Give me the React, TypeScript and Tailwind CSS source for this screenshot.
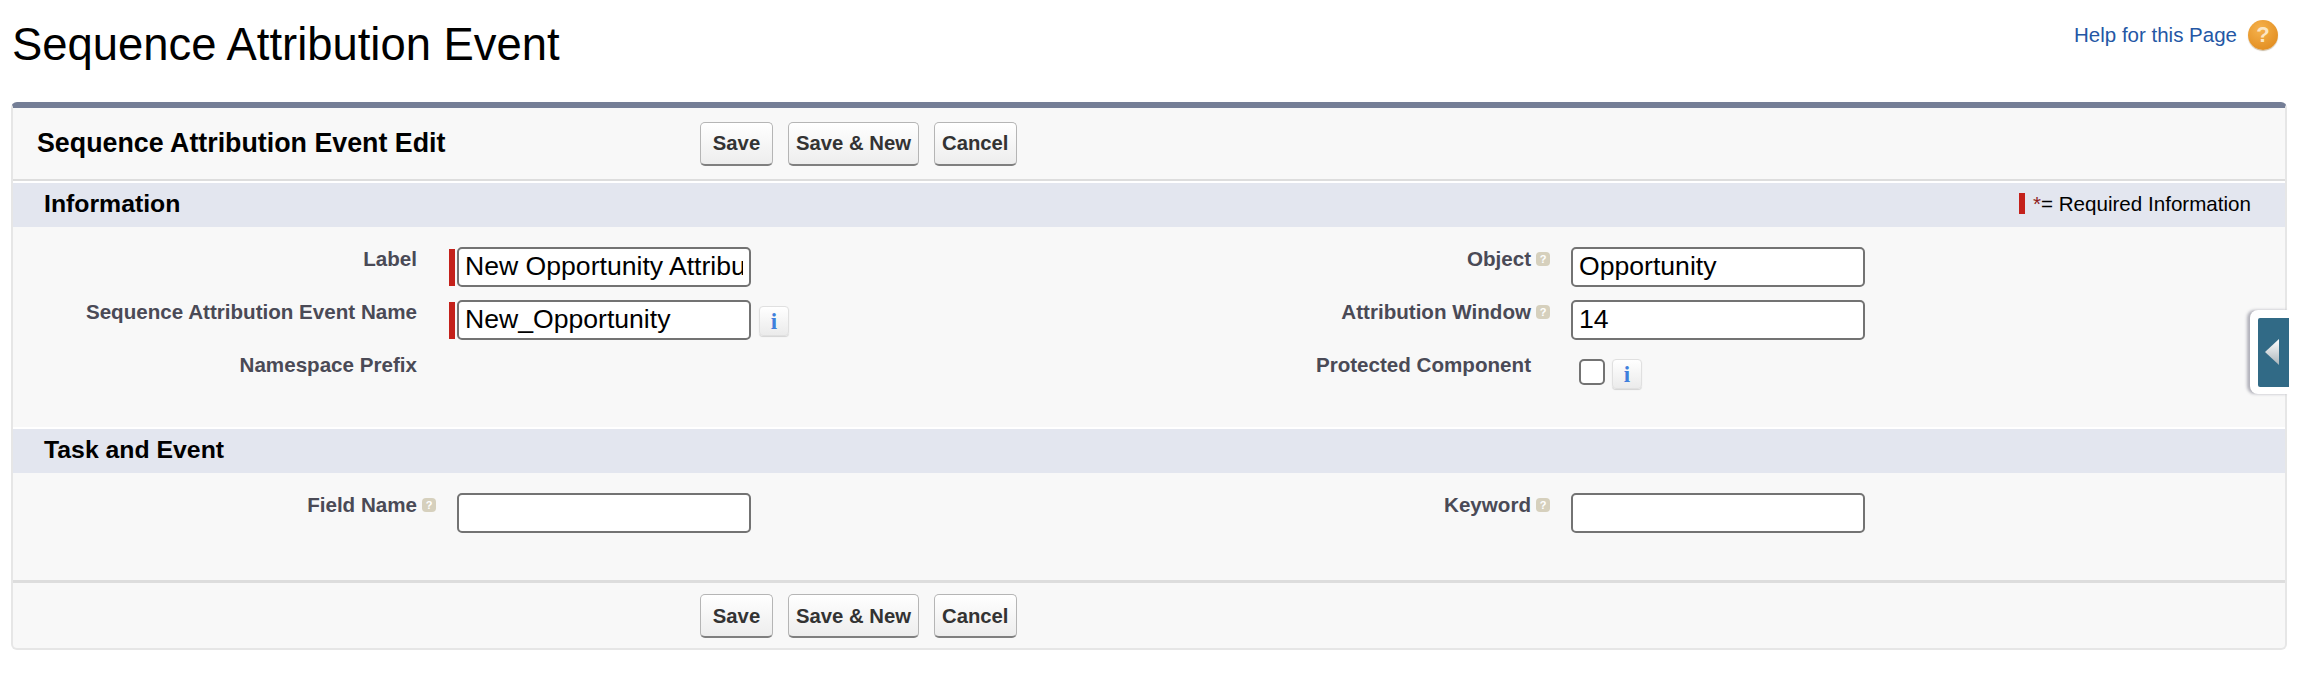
import { FC, ReactNode } from "react";

const HelpDot: FC = () => (
  <span className="flex h-[14px] w-[14px] items-center justify-center rounded-[4px] bg-[#d6d0bd] text-[11px] font-bold leading-none text-white">
    ?
  </span>
);

const InfoButton: FC = () => (
  <span className="flex h-[30px] w-[30px] items-center justify-center rounded-[4px] border border-[#e0e0e0] bg-gradient-to-b from-white to-[#ebebeb] font-['Liberation_Serif',serif] text-[23px] font-bold leading-none text-[#3f7fdc] shadow-[0_1px_1px_rgba(0,0,0,0.15)]">
    i
  </span>
);

const TextBox: FC<{ value?: string; required?: boolean }> = ({
  value = "",
  required,
}) => (
  <span className="relative block">
    {required && (
      <span className="absolute -left-2 top-[2px] h-[37px] w-[6px] bg-[#c4211b]" />
    )}
    <input
      readOnly
      value={value}
      className="block h-10 w-[294px] rounded-[5px] border-2 border-[#737373] bg-white px-[6px] pb-[2px] text-[26.6px] text-black outline-none"
    />
  </span>
);

type FieldProps = {
  label: string;
  help?: boolean;
  children: ReactNode;
};

const Field: FC<FieldProps> = ({ label, help, children }) => (
  <div className="flex items-start">
    <div className="w-[404px] text-right text-[20.6px] font-bold leading-6 text-[#4a4a56]">
      {label}
    </div>
    <div className="flex h-6 w-10 items-center pl-[5px]">
      {help && <HelpDot />}
    </div>
    <div className="flex items-start gap-[8px]">{children}</div>
  </div>
);

const Buttons: FC = () => (
  <div className="flex gap-[15px]">
    {["Save", "Save & New", "Cancel"].map((name) => (
      <button
        key={name}
        className="h-[44px] min-w-[73px] rounded-[5px] border border-b-2 border-[#b5b5b5] border-b-[#7f7f7f] bg-gradient-to-b from-white to-[#ededed] px-[7px] pt-[1px] text-[20.3px] font-bold text-[#333333]"
      >
        {name}
      </button>
    ))}
  </div>
);

const SectionBar: FC<{ title: string; children?: ReactNode }> = ({
  title,
  children,
}) => (
  <div className="flex h-11 items-center justify-between bg-[#e3e6ef] pb-[2px] pl-[31px] pr-[34px]">
    <h3 className="text-[24.8px] font-bold text-black">{title}</h3>
    {children}
  </div>
);

export default function App() {
  return (
    <div className="relative h-[676px] overflow-hidden bg-white font-['Liberation_Sans',Arial,sans-serif]">
      <header className="flex h-[102px] items-start justify-between pl-3 pr-5">
        <h1 className="mt-[18px] text-[45.4px] leading-[54px] text-black">
          Sequence Attribution Event
        </h1>
        <div className="mt-5 flex items-center gap-[11px]">
          <a className="text-[20.5px] text-[#2457a5]">Help for this Page</a>
          <span className="flex h-[30px] w-[30px] items-center justify-center rounded-full bg-[radial-gradient(circle_at_40%_30%,#f6b24c,#dd8517)] text-[22px] font-bold leading-none text-[#fbe6c4] shadow-[0_1px_1px_rgba(120,80,20,0.4)]">
            ?
          </span>
        </div>
      </header>

      <div className="mx-[11px] h-[548px] rounded-[6px] border-x-2 border-b-2 border-t-[6px] border-x-[#e6e6e6] border-b-[#e6e6e6] border-t-[#747e96] bg-[#f8f8f8]">
        <div className="flex h-[73px] items-center border-b-[2px] border-[#dddddd]">
          <h2 className="w-[687px] pb-[1px] pl-[24px] text-[26.8px] font-bold text-black">
            Sequence Attribution Event Edit
          </h2>
          <Buttons />
        </div>
        <div className="h-[2px] bg-white" />

        <SectionBar title="Information">
          <div className="flex items-center text-[20.6px] text-black">
            <span className="mr-[8px] h-[21px] w-[6px] bg-[#c4211b]" />
            <span className="text-[#8e1c1c]">*</span>= Required Information
          </div>
        </SectionBar>
        <div className="h-[202px] border-b-2 border-white pt-5">
          <div className="grid grid-cols-[1114px_1fr] gap-y-[13px]">
            <Field label="Label">
              <TextBox value="New Opportunity Attribution" required />
            </Field>
            <Field label="Object" help>
              <TextBox value="Opportunity" />
            </Field>
            <Field label="Sequence Attribution Event Name">
              <TextBox value="New_Opportunity" required />
              <span className="mt-[6px]">
                <InfoButton />
              </span>
            </Field>
            <Field label="Attribution Window" help>
              <TextBox value="14" />
            </Field>
            <Field label="Namespace Prefix">
              <span />
            </Field>
            <Field label="Protected Component">
              <span className="ml-2 mt-[6px] block h-[26px] w-[26px] rounded-[5px] border-2 border-[#737373] bg-white" />
              <span className="-ml-[1px] mt-[6px]">
                <InfoButton />
              </span>
            </Field>
          </div>
        </div>

        <SectionBar title="Task and Event" />
        <div className="h-[107px] pt-5">
          <div className="grid grid-cols-[1114px_1fr]">
            <Field label="Field Name" help>
              <TextBox />
            </Field>
            <Field label="Keyword" help>
              <TextBox />
            </Field>
          </div>
        </div>

        <div className="flex h-[68px] items-start border-t-[3px] border-[#dddddd] pl-[687px] pt-[11px]">
          <Buttons />
        </div>
      </div>

      <div className="absolute right-[9px] top-[310px] flex h-[84px] w-[39px] items-center rounded-l-[8px] bg-white pl-2 shadow-[-3px_0_3px_rgba(90,90,110,0.45)]">
        <div className="flex h-[69px] flex-1 items-center rounded-l-[2px] bg-[#316a86] pl-[7px]">
          <svg width="14" height="26" viewBox="0 0 14 26">
            <defs>
              <linearGradient id="tri" x1="0" y1="0" x2="0" y2="1">
                <stop offset="0" stopColor="#ffffff" />
                <stop offset="1" stopColor="#a9b4ba" />
              </linearGradient>
            </defs>
            <polygon points="14,0 14,26 0,13" fill="url(#tri)" />
          </svg>
        </div>
      </div>
    </div>
  );
}
